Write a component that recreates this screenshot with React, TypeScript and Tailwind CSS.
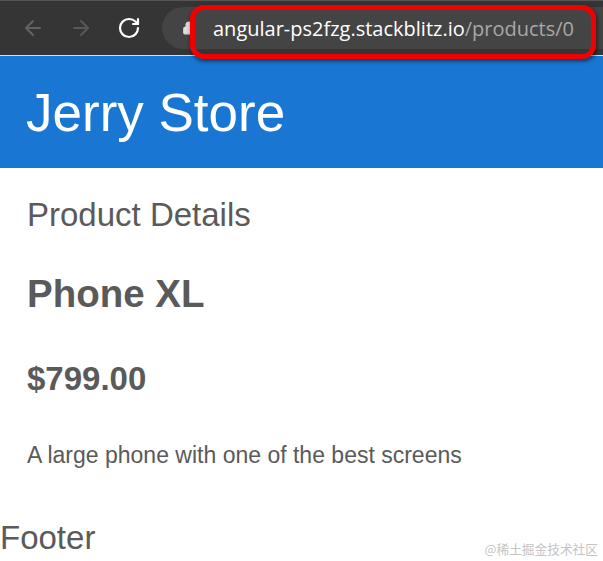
import { ArrowLeft, ArrowRight, Lock, RotateCw } from 'lucide-react';

export default function App() {
  return (
    <div className="relative h-[561px] w-[603px] overflow-hidden bg-white font-['Liberation_Sans',sans-serif] text-[#5a5a5a]">
      {/* browser toolbar */}
      <div className="flex h-[56px] items-center border-t border-t-[#555] border-b border-b-[#ddd] bg-[#353535]">
        <ArrowLeft className="ml-[21px] h-[24px] w-[24px] text-[#5f6368]" strokeWidth={2} />
        <ArrowRight className="ml-[24px] h-[24px] w-[24px] text-[#55585c]" strokeWidth={2} />
        <RotateCw className="ml-[24px] h-[24px] w-[24px] text-white" strokeWidth={2.2} />
        <div className="ml-[21px] flex h-[42px] flex-1 items-center rounded-l-[21px] bg-[#444] pl-[20px]">
          <Lock className="h-[14px] w-[14px] text-[#ddd]" fill="#ddd" />
          <div className="ml-[17px] mt-[1px] whitespace-nowrap font-['Open_Sans',sans-serif] text-[20px] text-white">
            angular-ps2fzg.stackblitz.io<span className="text-[#a8a8a8]">/products/0</span>
          </div>
        </div>
      </div>

      {/* red highlight over the address bar */}
      <div className="absolute left-[190px] top-[5px] h-[54px] w-[406px] rounded-[14px] border-[5px] border-[#f00000] shadow-[1px_2px_4px_rgba(0,0,0,0.6)]" />

      <header className="flex h-[112px] items-center bg-[#1976d2] pl-[26px]">
        <h1 className="mt-[2px] text-[53px] text-white">Jerry Store</h1>
      </header>

      <main className="px-[27px]">
        <h2 className="mt-[28px] text-[33px] leading-[38px]">Product Details</h2>
        <h3 className="mt-[38px] text-[38.5px] font-bold leading-[44px]">Phone XL</h3>
        <h4 className="mt-[44px] text-[33px] font-bold leading-[38px]">$799.00</h4>
        <p className="mt-[41px] text-[23px] leading-[32px]">A large phone with one of the best screens</p>
      </main>

      <footer className="mt-[48px] text-[33px] leading-[38px]">Footer</footer>

      <div className="absolute right-[5px] top-[540px] font-['Noto_Sans_CJK_SC',sans-serif] text-[12.7px] leading-[18px] text-[#c4c4c4]">
        @稀土掘金技术社区
      </div>
    </div>
  );
}
